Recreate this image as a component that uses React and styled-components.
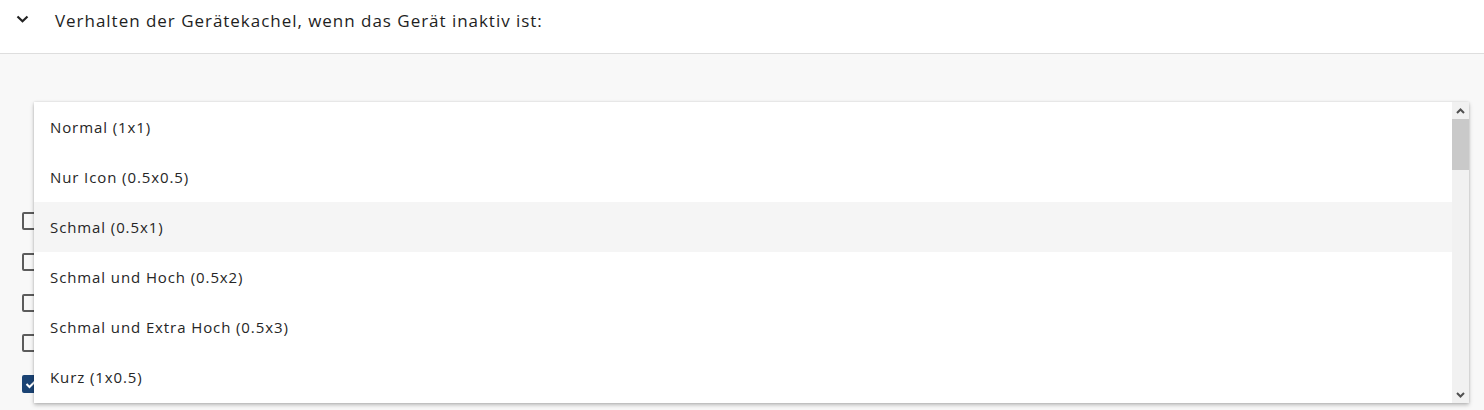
import React from "react";
import styled, { createGlobalStyle } from "styled-components";

const Global = createGlobalStyle`
  html, body { margin: 0; padding: 0; background: #f8f8f8; }
  body { font-family: "Open Sans", "Noto Sans", sans-serif; color: #222; }
`;

const Page = styled.div`
  width: 1484px;
  height: 410px;
  overflow: hidden;
  position: relative;
  background: #f8f8f8;
`;

const Header = styled.div`
  height: 54px;
  box-sizing: border-box;
  background: #fff;
  border-bottom: 1px solid #dedede;
  display: flex;
  align-items: center;
  padding-left: 16px;
  padding-bottom: 13px;
  gap: 26px;
`;

const Chevron = styled.svg`
  width: 13px;
  height: 8px;
  flex: none;
  margin-top: -3px;
`;

const Title = styled.span`
  font-size: 17px;
  letter-spacing: 0.97px;
  color: #1e1e1e;
`;

const Content = styled.div`
  position: relative;
  padding: 158px 0 0 22px;
`;

const CheckList = styled.div`
  display: flex;
  flex-direction: column;
  gap: 22.75px;
`;

const Box = styled.span`
  display: flex;
  width: 18px;
  height: 18px;
  box-sizing: border-box;
  border-radius: 2px;
  border: 2px solid ${(p) => (p.$checked ? "#1b4374" : "#5c5c5c")};
  background: ${(p) => (p.$checked ? "#1b4374" : "transparent")};
  align-items: center;
  justify-content: center;
`;

const Menu = styled.div`
  position: absolute;
  left: 34px;
  top: 48px;
  width: 1435px;
  height: 301px;
  background: #fff;
  display: flex;
  box-shadow: 0 2px 4px rgba(0, 0, 0, 0.25), 0 0 2px rgba(0, 0, 0, 0.12);
  overflow: hidden;
`;

const Options = styled.ul`
  list-style: none;
  margin: 0;
  padding: 0;
  flex: 1;
`;

const Option = styled.li`
  height: 50px;
  display: flex;
  align-items: center;
  padding-left: 16px;
  font-size: 15px;
  letter-spacing: 0.9px;
  color: #262626;
  background: ${(p) => (p.$active ? "#f5f5f5" : "#fff")};
`;

const Scrollbar = styled.div`
  width: 17px;
  flex: none;
  background: #f1f1f1;
  display: flex;
  flex-direction: column;
`;

const Arrow = styled.div`
  height: 17px;
  display: flex;
  align-items: center;
  justify-content: center;
  flex: none;
`;

const Track = styled.div`
  flex: 1;
`;

const Thumb = styled.div`
  height: 51px;
  background: #c9c9c9;
`;

const options = [
  "Normal (1x1)",
  "Nur Icon (0.5x0.5)",
  "Schmal (0.5x1)",
  "Schmal und Hoch (0.5x2)",
  "Schmal und Extra Hoch (0.5x3)",
  "Kurz (1x0.5)",
];

export default function App() {
  return (
    <Page>
      <Global />
      <Header>
        <Chevron viewBox="0 0 13 8">
          <path d="M1.5 1.5 L6.5 6.2 L11.5 1.5" fill="none" stroke="#222" strokeWidth="2.2" />
        </Chevron>
        <Title>Verhalten der Gerätekachel, wenn das Gerät inaktiv ist:</Title>
      </Header>
      <Content>
        <CheckList>
          {[false, false, false, false, true].map((c, i) => (
            <Box key={i} $checked={c}>
              {c && (
                <svg width="12" height="10" viewBox="0 0 12 10">
                  <path d="M1.5 5 L4.5 8 L10.5 2" fill="none" stroke="#fff" strokeWidth="2" />
                </svg>
              )}
            </Box>
          ))}
        </CheckList>
        <Menu>
          <Options>
            {options.map((o, i) => (
              <Option key={o} $active={i === 2}>
                {o}
              </Option>
            ))}
          </Options>
          <Scrollbar>
            <Arrow>
              <svg width="9" height="6" viewBox="0 0 9 6">
                <path d="M1 5 L4.5 1.5 L8 5" fill="none" stroke="#505050" strokeWidth="2" />
              </svg>
            </Arrow>
            <Thumb />
            <Track />
            <Arrow>
              <svg width="9" height="6" viewBox="0 0 9 6">
                <path d="M1 1 L4.5 4.5 L8 1" fill="none" stroke="#505050" strokeWidth="2" />
              </svg>
            </Arrow>
          </Scrollbar>
        </Menu>
      </Content>
    </Page>
  );
}
